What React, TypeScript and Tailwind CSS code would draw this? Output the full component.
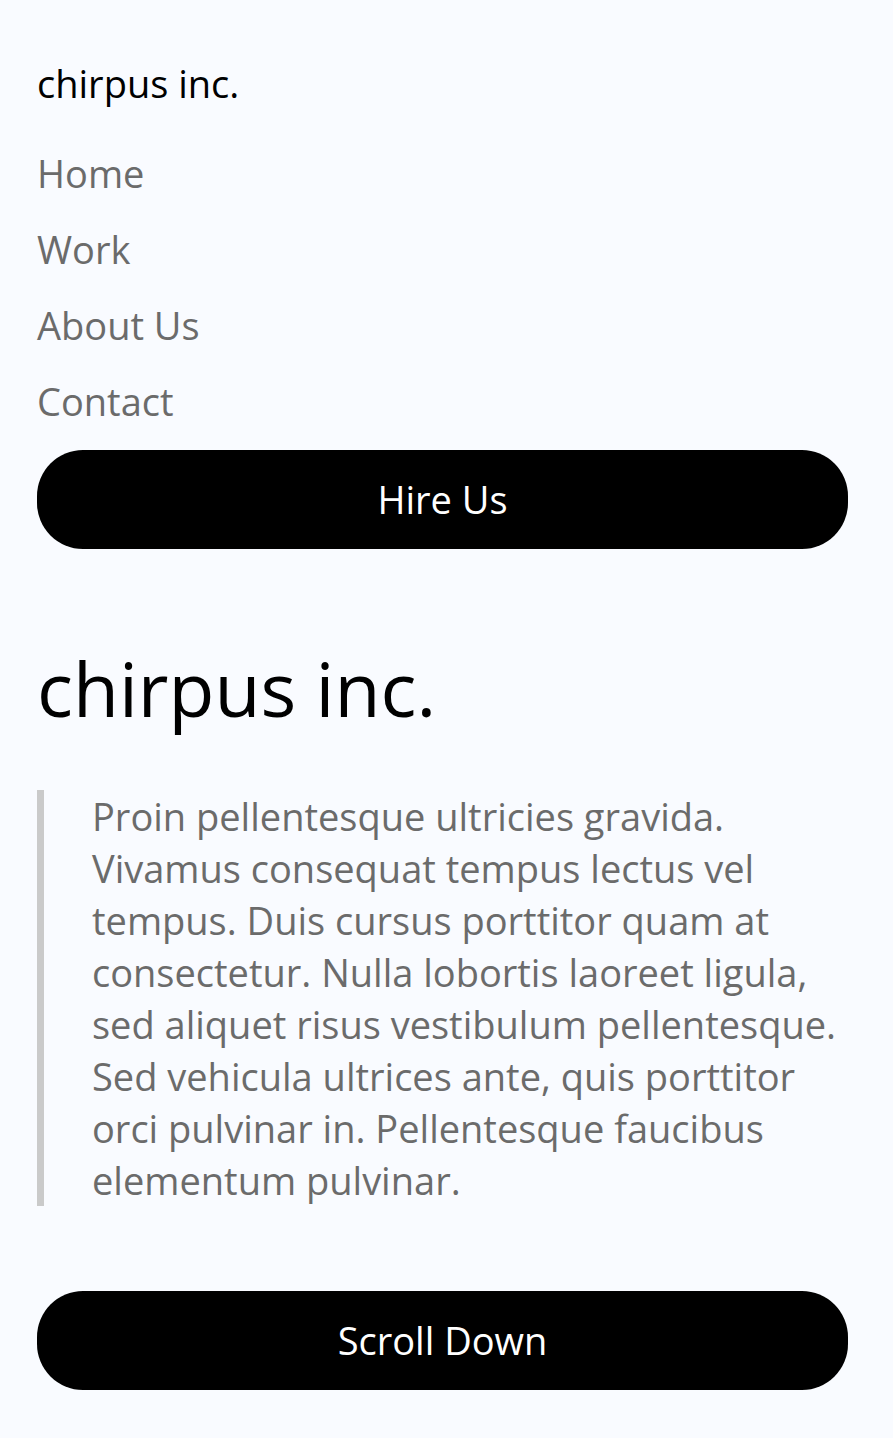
const navItems = [
  { label: "Home", href: "#home" },
  { label: "Work", href: "#work" },
  { label: "About Us", href: "#about" },
  { label: "Contact", href: "#contact" },
];

function PillButton({ label }: { label: string }) {
  return (
    <button
      type="button"
      className="flex w-full items-center justify-center rounded-[46px] bg-black pt-[23px] pb-6 text-[38px] leading-[52px] font-medium text-white"
    >
      {label}
    </button>
  );
}

function SiteHeader() {
  return (
    <header>
      <a href="#home" className="block text-black">
        chirpus inc.
      </a>
      <nav className="mt-[38px] mb-[23px]">
        <ul className="flex flex-col gap-6">
          {navItems.map((item) => (
            <li key={item.label}>
              <a href={item.href} className="block">
                {item.label}
              </a>
            </li>
          ))}
        </ul>
      </nav>
      <PillButton label="Hire Us" />
    </header>
  );
}

export default function App() {
  return (
    <div className="min-h-screen border-r-[3px] border-white bg-[#f9fbff] pt-[57px] pr-[45px] pb-12 pl-[37px] font-['Open_Sans','Noto_Sans',sans-serif] text-[38px] leading-[52px] text-[#6b6b6b]">
      <SiteHeader />
      <main>
        <h1 className="mt-[87px] text-[75px] leading-[104px] text-black">chirpus inc.</h1>
        <p className="mt-[50px] mb-[85px] border-l-[7px] border-[#cacaca] pl-12">
          Proin pellentesque ultricies gravida. Vivamus consequat tempus lectus vel tempus. Duis
          cursus porttitor quam at consectetur. Nulla lobortis laoreet ligula, sed aliquet risus
          vestibulum pellentesque. Sed vehicula ultrices ante, quis porttitor orci pulvinar in.
          Pellentesque faucibus elementum pulvinar.
        </p>
        <PillButton label="Scroll Down" />
      </main>
    </div>
  );
}
